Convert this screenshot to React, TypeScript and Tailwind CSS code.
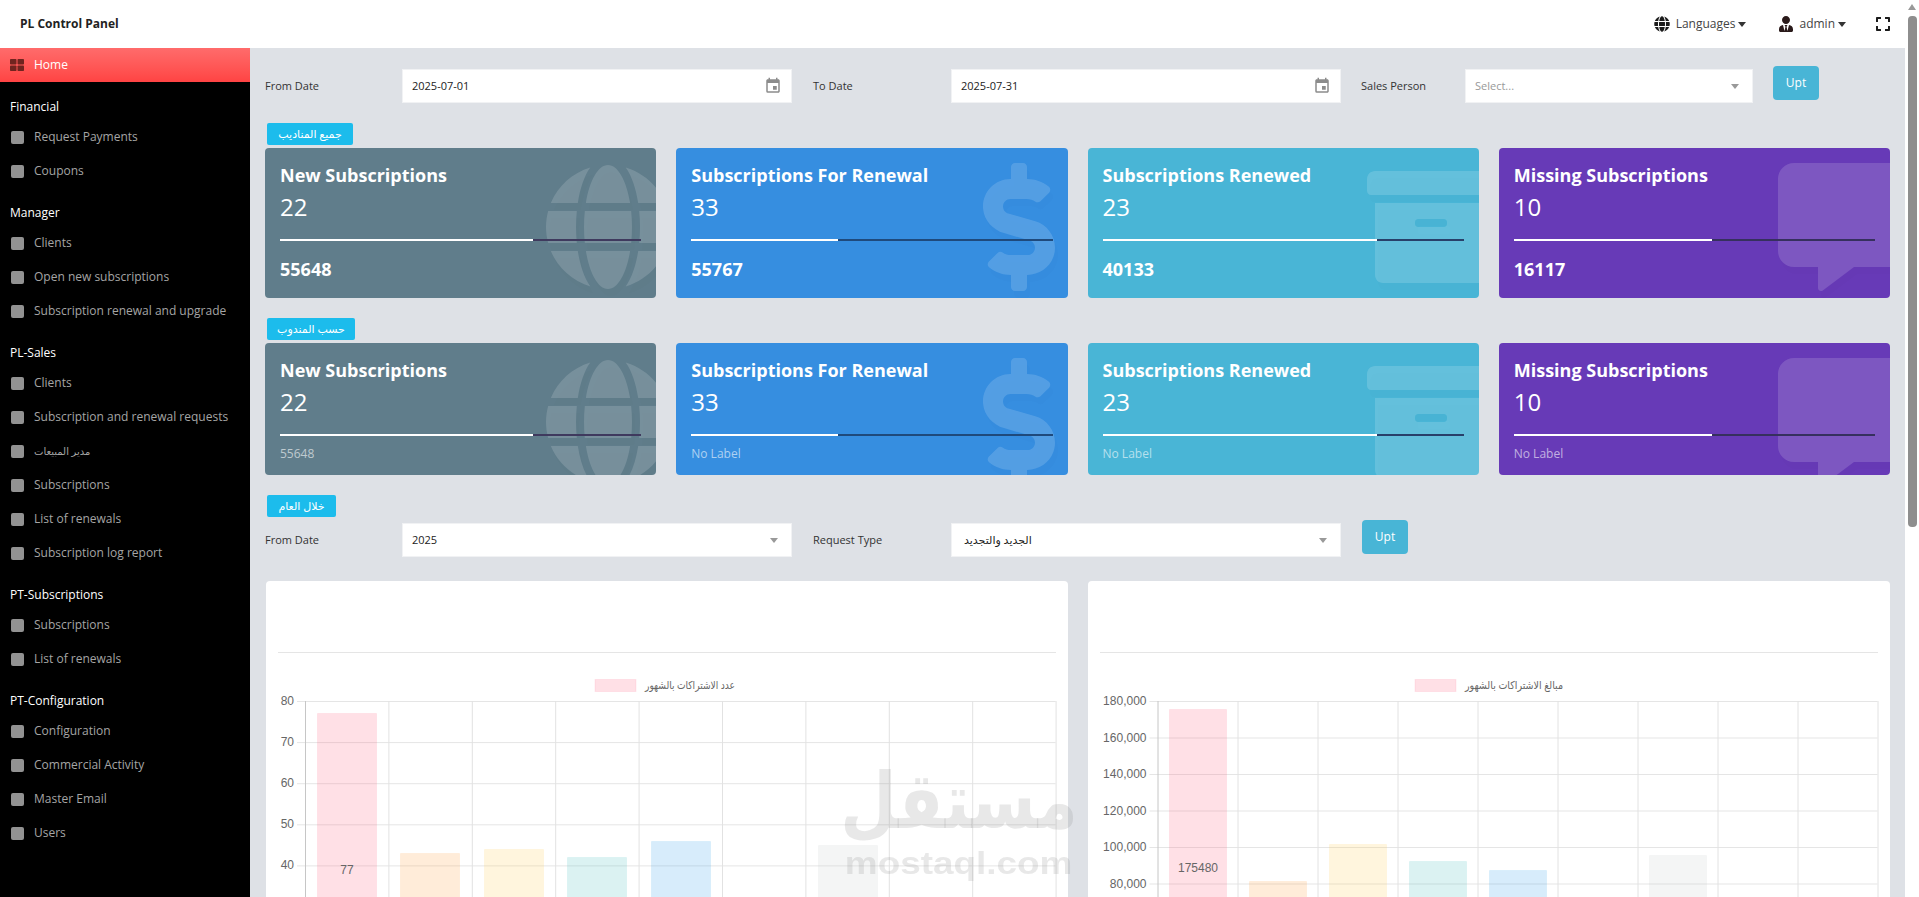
import { FaArchive, FaCommentAlt, FaDollarSign, FaExpand, FaGlobe, FaUserTie } from "react-icons/fa";
import { MdEvent } from "react-icons/md";
import type { ReactNode } from "react";

const menu = [
  { title: "Financial", items: ["Request Payments", "Coupons"] },
  { title: "Manager", items: ["Clients", "Open new subscriptions", "Subscription renewal and upgrade"] },
  {
    title: "PL-Sales",
    items: [
      "Clients",
      "Subscription and renewal requests",
      "مدير المبيعات",
      "Subscriptions",
      "List of renewals",
      "Subscription log report",
    ],
  },
  { title: "PT-Subscriptions", items: ["Subscriptions", "List of renewals"] },
  { title: "PT-Configuration", items: ["Configuration", "Commercial Activity", "Master Email", "Users"] },
];

const cards = [
  { title: "New Subscriptions", count: 22, total: "55648", bg: "bg-[#607d8b]", dark: "bg-[#3f3a5e]", fill: "w-[70%]", Icon: FaGlobe },
  { title: "Subscriptions For Renewal", count: 33, total: "55767", bg: "bg-[#368ee0]", dark: "bg-[#1f4a7c]", fill: "w-[40.6%]", Icon: FaDollarSign },
  { title: "Subscriptions Renewed", count: 23, total: "40133", bg: "bg-[#49b5d6]", dark: "bg-[#28406a]", fill: "w-[76%]", Icon: FaArchive },
  { title: "Missing Subscriptions", count: 10, total: "16117", bg: "bg-[#673ab7]", dark: "bg-[#36305e]", fill: "w-[55%]", Icon: FaCommentAlt },
];

const barColors = ["#ff6384", "#ff9f40", "#ffcd56", "#4bc0c0", "#36a2eb", "#9966ff", "#c9cbcf"];

function Caret({ className }: { className: string }) {
  return <span className={`h-0 w-0 border-x-4 border-t-[5px] border-x-transparent ${className}`} />;
}

function Tag({ children, width }: { children: string; width: string }) {
  return (
    <div className={`ml-[2px] flex h-[22px] items-center justify-center rounded-[2px] bg-[#1cbcec] text-[11px] text-white ${width}`}>
      {children}
    </div>
  );
}

function Field({ children, label, labelWidth, width, mr }: { children: ReactNode; label: string; labelWidth: string; width: string; mr: string }) {
  return (
    <>
      <div className={`text-[11px] text-[#333] ${labelWidth}`}>{label}</div>
      <div className={`flex h-[34px] items-center justify-between border border-[#f1f2f4] bg-white pl-[9px] pr-[9px] text-[11px] text-[#222] ${width} ${mr}`}>
        {children}
      </div>
    </>
  );
}

function StatCard({ card, footer }: { card: (typeof cards)[number]; footer: "total" | "label" }) {
  const { Icon } = card;
  return (
    <div className={`relative overflow-hidden rounded-[4px] px-[15px] pt-[15px] text-white ${card.bg} ${footer === "total" ? "h-[150px]" : "h-[132px]"}`}>
      <Icon size={128} className="absolute left-[279px] top-[15px] text-white/15 [filter:drop-shadow(3px_7px_0_rgba(0,0,0,0.06))]" />
      <div className="relative">
        <div className="text-[18px] font-bold leading-[24px]">{card.title}</div>
        <div className="mt-[4px] text-[24px] font-medium leading-[32px]">{card.count}</div>
        <div className={`mt-[16px] h-[2px] ${card.dark}`}>
          <div className={`h-full bg-white ${card.fill}`} />
        </div>
        {footer === "total" ? (
          <div className="mt-[16px] text-[18px] font-bold leading-[24px]">{card.total}</div>
        ) : (
          <div className="mt-[9px] text-[12px] leading-[18px] text-white/60">{card === cards[0] ? card.total : "No Label"}</div>
        )}
      </div>
    </div>
  );
}

type ChartProps = {
  left: number;
  axisX: number;
  step: number;
  lineStep: number;
  ticks: string[];
  bars: { x: number; top: number }[];
  barWidth: number;
  value: string;
  valueY: number;
  legend: string;
  swatchX: number;
  legendEnd: number;
  legendWidth: number;
};

// coordinates are page pixels, the viewBox starts where the card body starts
function BarChart(p: ChartProps) {
  const columns = Array.from({ length: 10 }, (_, i) => p.axisX + i * p.step);
  const right = columns[9];
  const lines = Array.from({ length: 7 }, (_, i) => 701 + i * p.lineStep);
  return (
    <svg viewBox={`${p.left} 653 803 300`} width={803} height={300} className="block font-['Liberation_Sans','DejaVu_Sans',sans-serif]">
      <rect x={p.swatchX} y={679.5} width={41} height={12} fill="#ff6384" fillOpacity={0.2} stroke="#ff6384" strokeOpacity={0.12} />
      <text x={p.legendEnd - p.legendWidth} y={689} fontSize={11} fill="#666" textLength={p.legendWidth} lengthAdjust="spacingAndGlyphs">
        {p.legend}
      </text>
      {lines.map((y) => (
        <line key={y} x1={p.axisX - 8} x2={right} y1={y + 0.5} y2={y + 0.5} stroke="#e5e5e5" />
      ))}
      {columns.map((x, i) => (
        <line key={x} x1={x + 0.5} x2={x + 0.5} y1={701} y2={953} stroke={i === 0 ? "#c6c6c6" : "#e2e2e2"} />
      ))}
      {p.ticks.map((t, i) => (
        <text key={t} x={p.axisX - 11} y={705 + i * p.lineStep} textAnchor="end" fontSize={12} fill="#666">
          {t}
        </text>
      ))}
      {p.bars.map((b, i) => (
        <rect key={b.x} x={b.x} y={b.top} width={p.barWidth} height={953 - b.top} fill={barColors[i === 5 ? 6 : i]} fillOpacity={0.2} stroke={barColors[i === 5 ? 6 : i]} strokeOpacity={0.1} />
      ))}
      <text x={p.bars[0].x + p.barWidth / 2} y={p.valueY} textAnchor="middle" fontSize={12} fill="#666">
        {p.value}
      </text>
    </svg>
  );
}

export default function App() {
  return (
    <div className="relative flex h-[897px] overflow-hidden bg-white font-['Open_Sans','DejaVu_Sans',sans-serif]">
      <div className="flex min-w-0 flex-1 flex-col">
        {/* Header */}
        <header className="flex h-[48px] shrink-0 items-center bg-white pl-[20px] pr-[14px]">
          <div className="text-[12px] font-bold text-[#222]">PL Control Panel</div>
          <div className="ml-auto flex items-center text-[12px] text-[#444]">
            <FaGlobe size={16} className="mr-[6px] text-[#1c1c1c]" />
            <span>Languages</span>
            <Caret className="ml-[3px] border-t-[#333]" />
            <FaUserTie size={16} className="ml-[32px] mr-[5px] text-[#2a1a1a]" />
            <span>admin</span>
            <Caret className="ml-[3px] border-t-[#333]" />
            <FaExpand size={16} className="ml-[29px] text-[#1c1c1c]" />
          </div>
        </header>

        <div className="flex min-h-0 flex-1">
          {/* Sidebar */}
          <aside className="w-[250px] shrink-0 bg-black text-[12px]">
            <div className="flex h-[34px] items-center bg-gradient-to-b from-[#ff6b6b] to-[#ff4343] pl-[10px] text-white">
              <svg width="14" height="12" viewBox="0 0 14 12" className="mr-[10px]" fill="#70241f">
                <rect width="6.5" height="5.5" rx="0.8" />
                <rect x="7.5" width="6.5" height="5.5" rx="0.8" />
                <rect y="6.5" width="6.5" height="5.5" rx="0.8" />
                <rect x="7.5" y="6.5" width="6.5" height="5.5" rx="0.8" />
              </svg>
              Home
            </div>
            {menu.map((group) => (
              <div key={group.title} className="mt-[12px]">
                <div className="flex h-[26px] items-center pl-[10px] text-white">{group.title}</div>
                {group.items.map((item) => (
                  <div key={group.title + item} className={`flex h-[34px] items-center pl-[11px] text-[#a5a5a5] ${item === "مدير المبيعات" ? "text-[10px]" : ""}`}>
                    <span className="mr-[10px] h-[13px] w-[13px] rounded-[2px] bg-[#929292]" />
                    {item}
                  </div>
                ))}
              </div>
            ))}
          </aside>

          {/* Main */}
          <main className="min-w-0 flex-1 bg-[#dee1e6] px-[15px]">
            <div className="mt-[18px] flex items-center">
              <Field label="From Date" labelWidth="w-[137px]" width="w-[390px]" mr="mr-[21px]">
                2025-07-01
                <MdEvent size={18} className="text-[#8c8c8c]" />
              </Field>
              <Field label="To Date" labelWidth="w-[138px]" width="w-[390px]" mr="mr-[20px]">
                2025-07-31
                <MdEvent size={18} className="text-[#8c8c8c]" />
              </Field>
              <Field label="Sales Person" labelWidth="w-[104px]" width="w-[288px]" mr="mr-[20px]">
                <span className="text-[#999]">Select...</span>
                <Caret className="mr-[4px] border-t-[#999]" />
              </Field>
              <button className="mb-[6px] h-[34px] w-[46px] rounded-[4px] bg-[#48b5d6] text-[12px] text-white">Upt</button>
            </div>

            <div className="mt-[17px]">
              <Tag width="w-[86px]">جميع المناديب</Tag>
            </div>
            <div className="mt-[3px] grid grid-cols-4 gap-[20px]">
              {cards.map((card) => (
                <StatCard key={card.title} card={card} footer="total" />
              ))}
            </div>

            <div className="mt-[20px]">
              <Tag width="w-[88px]">حسب المندوب</Tag>
            </div>
            <div className="mt-[3px] grid grid-cols-4 gap-[20px]">
              {cards.map((card) => (
                <StatCard key={card.title} card={card} footer="label" />
              ))}
            </div>

            <div className="mt-[20px]">
              <Tag width="w-[69px]">خلال العام</Tag>
            </div>
            <div className="mt-[3px] flex items-center">
              <Field label="From Date" labelWidth="w-[137px]" width="w-[390px]" mr="mr-[21px]">
                2025
                <Caret className="mr-[4px] border-t-[#999]" />
              </Field>
              <Field label="Request Type" labelWidth="w-[138px]" width="w-[390px]" mr="mr-[21px]">
                <span className="pl-[3px] text-[11px]">الجديد والتجديد</span>
                <Caret className="mr-[4px] border-t-[#999]" />
              </Field>
              <button className="mb-[6px] h-[34px] w-[46px] rounded-[4px] bg-[#48b5d6] text-[12px] text-white">Upt</button>
            </div>

            {/* Charts */}
            <div className="mt-[21px] grid grid-cols-2 gap-[20px] pl-px">
              <div className="h-[400px] overflow-hidden rounded-[4px] bg-white">
                <div className="mx-[12px] h-[72px] border-b border-[#e5e5e5]" />
                <BarChart
                  left={266}
                  axisX={305}
                  step={83.4}
                  lineStep={41.1}
                  ticks={["80", "70", "60", "50", "40"]}
                  bars={[
                    { x: 317.5, top: 713.5 },
                    { x: 400.5, top: 853.5 },
                    { x: 484.5, top: 849.5 },
                    { x: 567.5, top: 857.5 },
                    { x: 651.5, top: 841.5 },
                    { x: 818.5, top: 845.5 },
                  ]}
                  barWidth={59}
                  value="77"
                  valueY={874}
                  legend="عدد الاشتراكات بالشهور"
                  swatchX={595}
                  legendEnd={735}
                  legendWidth={90}
                />
              </div>
              <div className="h-[400px] overflow-hidden rounded-[4px] bg-white">
                <div className="mx-[12px] h-[72px] border-b border-[#e5e5e5]" />
                <BarChart
                  left={1089}
                  axisX={1158.5}
                  step={80}
                  lineStep={36.5}
                  ticks={["180,000", "160,000", "140,000", "120,000", "100,000", "80,000"]}
                  bars={[
                    { x: 1170.5, top: 709.5 },
                    { x: 1250.5, top: 881.5 },
                    { x: 1330.5, top: 844.5 },
                    { x: 1410.5, top: 861.5 },
                    { x: 1490.5, top: 870.5 },
                    { x: 1650.5, top: 855.5 },
                  ]}
                  barWidth={57}
                  value="175480"
                  valueY={872}
                  legend="مبالغ الاشتراكات بالشهور"
                  swatchX={1416}
                  legendEnd={1564}
                  legendWidth={98}
                />
              </div>
            </div>
          </main>
        </div>
      </div>

      {/* Scrollbar */}
      <div className="relative w-[14px] shrink-0 bg-white">
        <span className="absolute left-[3px] top-[4px] h-0 w-0 border-x-4 border-b-[6px] border-x-transparent border-b-[#999]" />
        <div className="absolute left-[3px] top-[16px] h-[511px] w-[9px] rounded-[4px] bg-[#8e8e8e]" />
      </div>

      {/* Watermark */}
      <div className="pointer-events-none absolute left-[844px] top-[750px] flex w-[230px] flex-col items-center text-[#8c8c8c]/20">
        <div className="scale-y-[1.2] text-[65px] font-bold leading-[96px]">مستقل</div>
        <div className="scale-x-[1.19] font-['Liberation_Sans',sans-serif] text-[31px] font-bold leading-[36px]">mostaql.com</div>
      </div>
    </div>
  );
}
